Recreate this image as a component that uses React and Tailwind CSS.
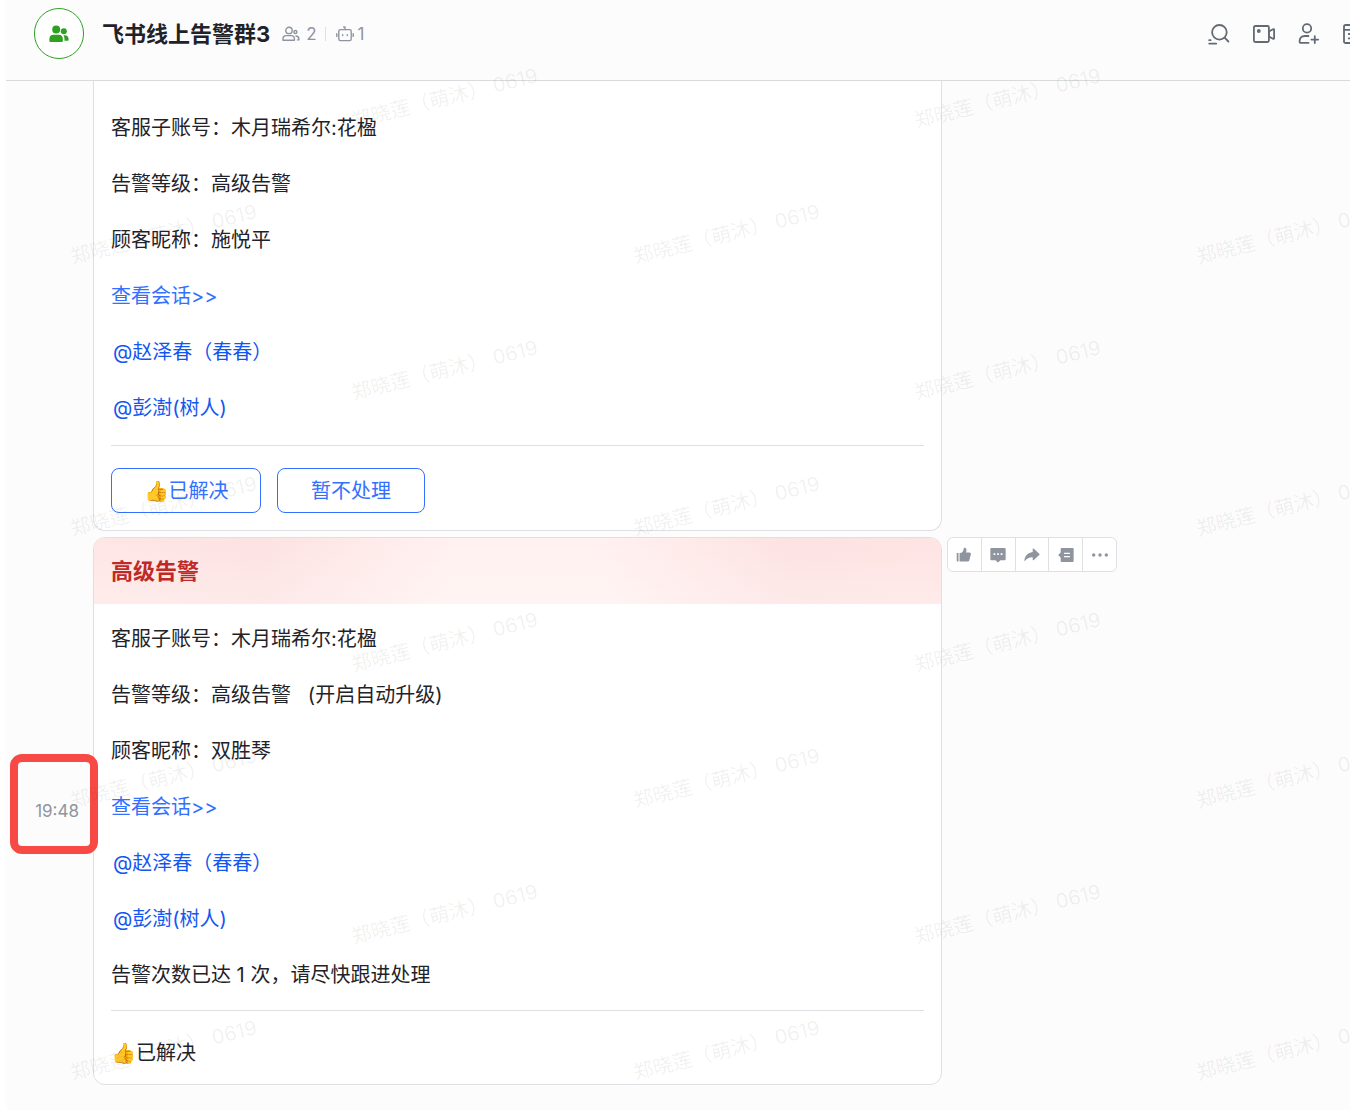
import { clsx } from "clsx";

const MEMBER_MENTIONS = ["@赵泽春（春春）", "@彭澍(树人)"];

const WATERMARK_ROWS = [0, 1, 2, 3, 4, 5, 6, 7];
const WATERMARK_COLUMNS = [0, 1, 2];

/* ---------- Icons ---------- */

function GroupSolidIcon({ className }) {
  return (
    <svg viewBox="0 0 20 18" fill="currentColor" className={className}>
      <circle cx="7.2" cy="4.6" r="4" />
      <path d="M0.4 16.2v-2.4c0-2.4 1.6-4 4-4h5.4c2.4 0 4 1.6 4 4v2.4c0 .4-.3.7-.7.7h-12c-.4 0-.7-.3-.7-.7z" />
      <circle cx="14.8" cy="6.2" r="3" />
      <path d="M14.4 10.2h1.4c2.2 0 3.8 1.5 3.8 3.6v1.2c0 .4-.3.7-.7.7h-3.4v-1.8c0-1.4-.4-2.7-1.1-3.7z" />
    </svg>
  );
}

function GroupIcon({ className }) {
  return (
    <svg viewBox="0 0 18 16" fill="none" stroke="currentColor" strokeWidth="1.4" strokeLinejoin="round" strokeLinecap="round" className={className}>
      <circle cx="7" cy="4.4" r="3.2" />
      <path d="M1 14.2v-1.4c0-2 1.3-3.2 3.2-3.2h5c1.9 0 3.2 1.2 3.2 3.2v1.4z" />
      <circle cx="13.4" cy="6" r="1.5" />
      <path d="M14 10c1.800.2 2.900 1.400 2.900 3v.9h-1.500" />
    </svg>
  );
}

function RobotIcon({ className }) {
  return (
    <svg viewBox="0 0 18 16" fill="none" stroke="currentColor" strokeWidth="1.4" strokeLinecap="round" className={className}>
      <rect x="2.8" y="3.6" width="12.4" height="11" rx="1.6" />
      <path d="M9 3.600V1M7.600 1h1.400M0.800 7.800v2.600M17.200 7.800v2.600M6.700 8.700v.8M11.300 8.700v.8" />
    </svg>
  );
}

function SearchChatIcon({ className }) {
  return (
    <svg viewBox="0 0 22 22" fill="none" stroke="currentColor" strokeWidth="1.8" strokeLinecap="round" className={className}>
      <circle cx="11.4" cy="9.3" r="7.3" />
      <path d="M16.6 14.6l3.8 3.9M1.2 17.2h1.4M1.2 20.6h7" />
    </svg>
  );
}

function VideoIcon({ className }) {
  return (
    <svg viewBox="0 0 22 22" fill="none" stroke="currentColor" strokeWidth="1.8" strokeLinejoin="round" className={className}>
      <rect x="0.9" y="3" width="15" height="16" rx="1.4" />
      <path d="M15.9 8.6l4-2.4c.6-.3 1.2 0 1.2.6v8.4c0 .6-.6.9-1.2.6l-4-2.4z" />
      <circle cx="5.8" cy="8" r="1.9" fill="currentColor" stroke="none" />
    </svg>
  );
}

function AddMemberIcon({ className }) {
  return (
    <svg viewBox="0 0 22 22" fill="none" stroke="currentColor" strokeWidth="1.8" strokeLinecap="round" strokeLinejoin="round" className={className}>
      <circle cx="9" cy="5.4" r="4.2" />
      <path d="M10.4 13H6.800c-3.400 0-5.200 2.200-5.200 5.200v.8c0 .5.4.9.9.9h8M16.800 13.200v6.800M13.400 16.600h6.800" />
    </svg>
  );
}

function NoticeIcon({ className }) {
  return (
    <svg viewBox="0 0 22 22" fill="none" stroke="currentColor" strokeWidth="1.8" strokeLinecap="round" strokeLinejoin="round" className={className}>
      <rect x="1" y="2" width="18" height="18" rx="1.6" />
      <path d="M1 6.8h18M5.8 11h8M5.8 15.4h8" />
    </svg>
  );
}

function LikeIcon({ className }) {
  return (
    <svg viewBox="0 0 18 18" fill="currentColor" className={className}>
      <path d="M1.400 6.800h1.400v9.600H1.400c-.3 0-.6-.3-.6-.6V7.400c0-.3.3-.6.6-.6z" />
      <path d="M4 6.800l2.300-.3c1.300-.8 2-2.400 2.300-4.200.2-1 .9-1.500 1.800-1.300 1.200.3 1.600 1.600 1.300 3l-.4 2.200h3.900c1.100 0 1.800 1 1.500 2l-1.600 6.400c-.3 1.100-1.200 1.800-2.300 1.800H4z" />
    </svg>
  );
}

function ReplyIcon({ className }) {
  return (
    <svg viewBox="0 0 18 18" className={className}>
      <path fill="currentColor" d="M1.4 1.2h15.2c.6 0 1 .4 1 1v11.600c0 .6-.4 1-1 1h-4.800L9 17.400l-2.800-2.600H1.400c-.6 0-1-.4-1-1V2.200c0-.6.4-1 1-1z" />
      <g fill="#fff">
        <rect x="4" y="7" width="2" height="2" />
        <rect x="8" y="7" width="2" height="2" />
        <rect x="12" y="7" width="2" height="2" />
      </g>
    </svg>
  );
}

function ForwardIcon({ className }) {
  return (
    <svg viewBox="0 0 18 18" fill="currentColor" className={className}>
      <path d="M9.800 2.200c0-.5.6-.8 1-.4l6.600 6c.3.3.3.7 0 1l-6.600 6c-.4.4-1 .1-1-.4v-3c-3.800-.1-6.600 1.200-8.600 4-.3.4-.9.2-.8-.3.700-4.800 3.800-8.600 9.400-9.400z" />
    </svg>
  );
}

function ThreadIcon({ className }) {
  return (
    <svg viewBox="0 0 18 18" className={className}>
      <path fill="currentColor" d="M4 1.200h12.600c.6 0 1 .4 1 1v13.600c0 .6-.4 1-1 1H4c-.6 0-1-.4-1-1v-4L0.200 9 3 6.200v-4c0-.6.4-1 1-1z" />
      <path stroke="#fff" strokeWidth="1.5" d="M6.800 7.200h6.600M6.800 10.800h6.600" />
    </svg>
  );
}

function MoreIcon({ className }) {
  return (
    <svg viewBox="0 0 18 18" fill="currentColor" className={className}>
      <circle cx="1.9" cy="9" r="1.9" />
      <circle cx="9" cy="9" r="1.9" />
      <circle cx="16.1" cy="9" r="1.9" />
    </svg>
  );
}

const HEADER_ACTIONS = [
  { label: "搜索", icon: SearchChatIcon },
  { label: "视频会议", icon: VideoIcon },
  { label: "添加成员", icon: AddMemberIcon },
  { label: "群公告", icon: NoticeIcon },
];

const MESSAGE_ACTIONS = [
  { label: "赞", icon: LikeIcon },
  { label: "回复", icon: ReplyIcon },
  { label: "转发", icon: ForwardIcon },
  { label: "话题", icon: ThreadIcon },
  { label: "更多", icon: MoreIcon },
];

/* ---------- Header ---------- */

function ChatHeader() {
  return (
    <header className="flex h-[81px] items-start overflow-hidden border-b border-[#d9dadc] pl-7 pt-2">
      <div className="flex h-[51px] w-[50px] shrink-0 items-center justify-center rounded-full border border-[#2ea121] bg-white">
        <GroupSolidIcon className="h-[18px] w-5 text-[#2ea121]" />
      </div>
      <div className="ml-[18px] flex h-[52px] items-center whitespace-nowrap">
        <h1 className="text-[22px] leading-8 font-bold text-[#1f2329]">飞书线上告警群3</h1>
        <div className="ml-3 flex items-center text-[17px] leading-6 text-[#8f959e]">
          <GroupIcon className="h-4 w-[18px]" />
          <span className="ml-1.5">2</span>
          <span className="mx-2 h-3.5 w-px bg-[#dee0e3]" />
          <RobotIcon className="ml-0.5 h-4 w-[18px]" />
          <span className="ml-1">1</span>
        </div>
      </div>
      <nav className="-mr-[15px] ml-auto flex h-[52px] items-center gap-[23px] text-[#646a73]">
        {HEADER_ACTIONS.map(({ label, icon: Icon }) => (
          <button key={label} type="button" aria-label={label}>
            <Icon className="size-[22px]" />
          </button>
        ))}
      </nav>
    </header>
  );
}

/* ---------- Messages ---------- */

function Card({ className, children }) {
  return (
    <article
      className={clsx(
        "w-[849px] min-w-0 overflow-hidden border-[#dee0e3] bg-white text-[20px] leading-7 text-[#1f2329]",
        className
      )}
    >
      {children}
    </article>
  );
}

function AlertDetails({ level, customer, children }) {
  return (
    <div className="flex flex-col gap-7">
      <p>客服子账号：木月瑞希尔:花楹</p>
      <p className="whitespace-pre">告警等级：{level}</p>
      <p>顾客昵称：{customer}</p>
      <p>
        <a href="#session" className="text-[#3370ff]">
          查看会话&gt;&gt;
        </a>
      </p>
      {MEMBER_MENTIONS.map((name) => (
        <p key={name} className="pl-0.5">
          <a href="#member" className="text-[#1456f0]">
            {name}
          </a>
        </p>
      ))}
      {children}
    </div>
  );
}

function MessageActions() {
  return (
    <div className="ml-[5px] flex h-[35px] w-[170px] shrink-0 divide-x divide-[#dee0e3] self-start rounded-md border border-[#dee0e3] bg-white text-[#8f959e]">
      {MESSAGE_ACTIONS.map(({ label, icon: Icon }) => (
        <button key={label} type="button" aria-label={label} className="flex flex-1 items-center justify-center">
          <Icon className="size-4" />
        </button>
      ))}
    </div>
  );
}

function OpenAlert() {
  return (
    <div className="flex pl-[87px]">
      <Card className="rounded-b-xl border-x border-b px-[17px] pt-[33px] pb-[17px]">
        <AlertDetails level="高级告警" customer="施悦平" />
        <hr className="mt-[23px] border-[#dee0e3]" />
        <div className="mt-[22px] flex gap-4">
          <button type="button" className="h-[45px] w-[150px] rounded-lg border border-[#3370ff] text-[#3370ff]">
            👍已解决
          </button>
          <button type="button" className="h-[45px] w-[148px] rounded-lg border border-[#3370ff] text-[#3370ff]">
            暂不处理
          </button>
        </div>
      </Card>
    </div>
  );
}

function ResolvedAlert() {
  return (
    <div className="mt-1.5 flex">
      <div className="relative flex w-[87px] shrink-0 items-center justify-end pr-3.5">
        <time className="text-[17px] leading-6 text-[#8f959e]">19:48</time>
        {/* Highlight around the send time */}
        <div className="absolute top-[217px] left-1 h-[100px] w-[88px] rounded-xl border-8 border-[#f84a45]" />
      </div>
      <Card className="rounded-xl border">
        <div className="bg-[linear-gradient(90deg,#fee6e5_0%,#fde2e2_20%,#fff1f0_42%,#fff1f0_60%,#fde2e2_82%,#fee4e3_100%)]">
          <div className="bg-linear-to-b from-white/0 to-white/25 px-[17px] py-[17px]">
            <h2 className="text-[22px] leading-8 font-semibold text-[#c02a26]">高级告警</h2>
          </div>
        </div>
        <div className="px-[17px] pt-[21px] pb-[17px]">
          <AlertDetails level="高级告警   (开启自动升级)" customer="双胜琴">
            <p>告警次数已达 1 次，请尽快跟进处理</p>
          </AlertDetails>
          <hr className="mt-[21px] mb-7 border-[#dee0e3]" />
          <p>👍已解决</p>
        </div>
      </Card>
      <MessageActions />
    </div>
  );
}

/* ---------- Watermark ---------- */

function Watermark() {
  return (
    <div
      aria-hidden="true"
      className="pointer-events-none absolute inset-0 overflow-hidden pt-[30px] text-[20px] whitespace-pre text-[#1f2329]/7 select-none"
    >
      {WATERMARK_ROWS.map((row) => (
        <div key={row} className={clsx("flex h-[136px]", row % 2 === 0 ? "pl-[163px]" : "-ml-[118px]")}>
          {WATERMARK_COLUMNS.map((column) => (
            <div key={column} className="flex w-[563px] shrink-0 items-center justify-center">
              <span className="-rotate-[14deg]">郑晓莲（萌沐） 0619</span>
            </div>
          ))}
        </div>
      ))}
    </div>
  );
}

export default function App() {
  return (
    <div className="relative min-h-screen overflow-hidden bg-white pl-1.5 font-['Inter','Noto_Sans_CJK_SC',sans-serif]">
      <div className="min-h-screen bg-[#fcfcfc]">
        <ChatHeader />
        <main className="pb-6">
          <OpenAlert />
          <ResolvedAlert />
        </main>
      </div>
      <Watermark />
    </div>
  );
}
